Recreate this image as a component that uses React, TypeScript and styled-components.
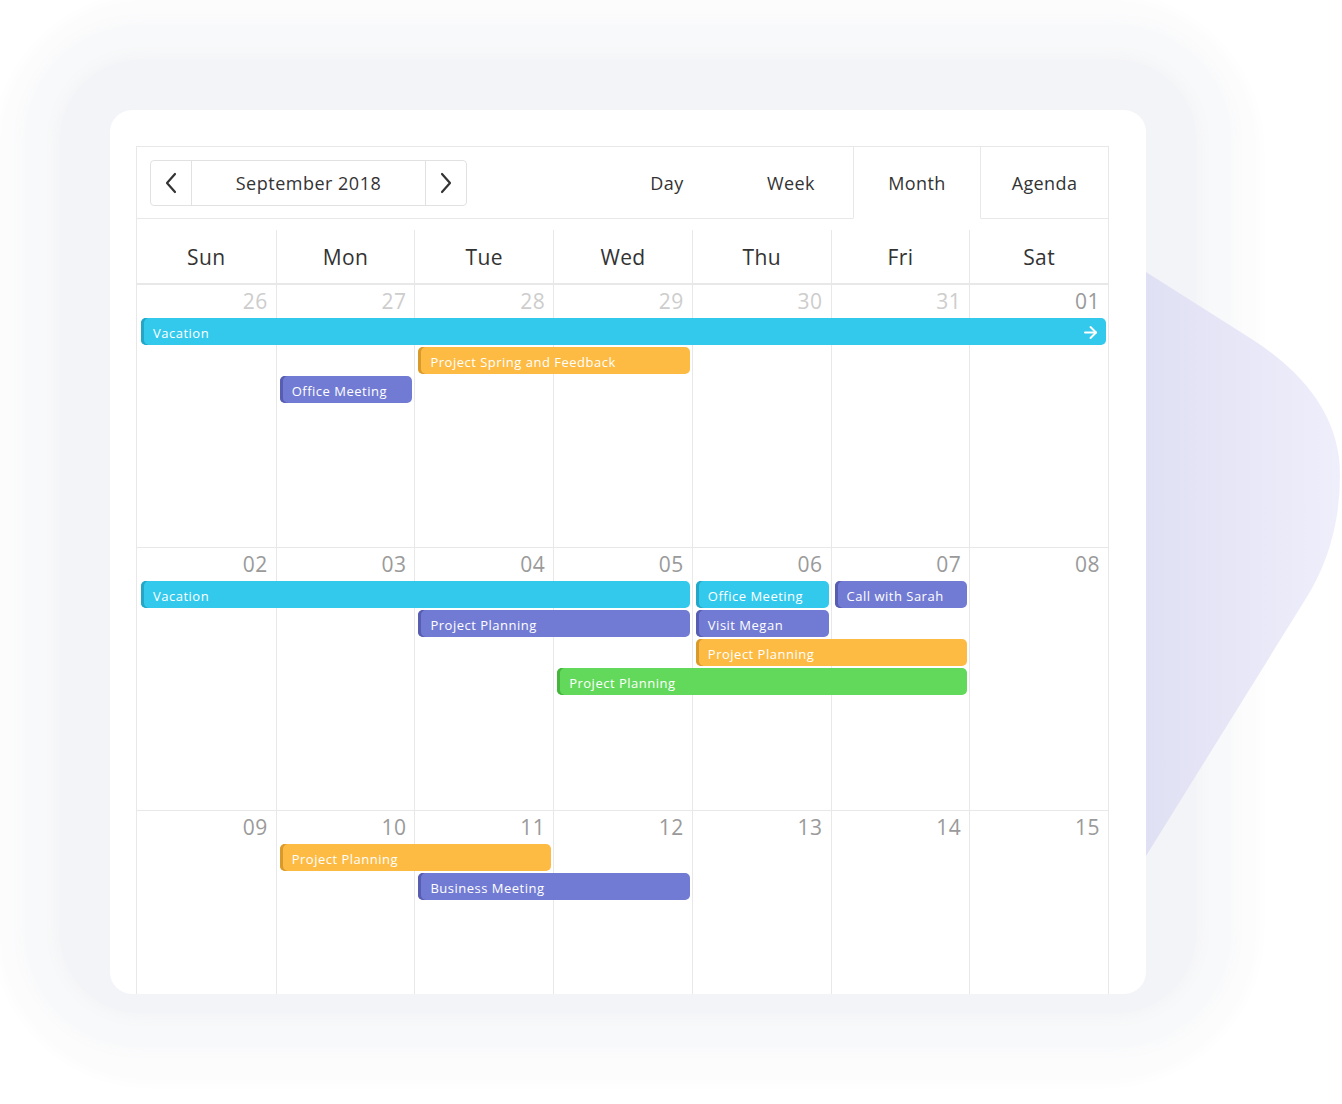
import React from 'react';
import styled, { createGlobalStyle } from 'styled-components';
import { ArrowRight } from 'lucide-react';

const GlobalStyle = createGlobalStyle`
  body {
    margin: 0;
    background: #ffffff;
    font-family: "Open Sans", "Noto Sans", sans-serif;
  }
`

type Tone = 'cyan' | 'orange' | 'purple' | 'green';

const tones: Record<Tone, { fill: string; edge: string }> = {
  cyan: { fill: '#33c9ed', edge: '#24a6c6' },
  orange: { fill: '#fdbb44', edge: '#d99a2c' },
  purple: { fill: '#727bd3', edge: '#575db0' },
  green: { fill: '#62d95a', edge: '#45b53e' },
};

const Stage = styled.div`
  position: relative;
  width: 1342px;
  height: 1104px;
  overflow: hidden;
  background: #ffffff;
`

// soft concentric glow behind the card
const Halo = styled.div<{ $pad: string; $bg: string; $radius: number }>`
  width: fit-content;
  padding: ${(p) => p.$pad};
  background: ${(p) => p.$bg};
  border-radius: ${(p) => p.$radius}px;
  box-shadow: 0 0 14px 4px ${(p) => p.$bg};
`

const Blob = styled.svg`
  position: absolute;
  left: 1100px;
  top: 250px;
  z-index: 1;
`

const Card = styled.div`
  position: relative;
  z-index: 2;
  width: 1036px;
  height: 884px;
  box-sizing: border-box;
  padding: 36px 37px 0 26px;
  background: #ffffff;
  border-radius: 22px;
  overflow: hidden;
`

const Calendar = styled.div`
  border: 1px solid #e8e8e8;
  border-bottom: none;
  color: #333333;
`

const Toolbar = styled.div`
  display: flex;
  height: 72px;
`

const NavArea = styled.div`
  flex: 1;
  display: flex;
  align-items: center;
  padding-left: 13px;
  border-bottom: 1px solid #e8e8e8;
`

const NavGroup = styled.div`
  display: flex;
  height: 46px;
  border: 1px solid #e1e1e1;
  border-radius: 4px;
  box-sizing: border-box;
`

const NavButton = styled.div`
  width: 40px;
  display: flex;
  align-items: center;
  justify-content: center;
`

const MonthLabel = styled.div`
  width: 233px;
  display: flex;
  align-items: center;
  justify-content: center;
  border-left: 1px solid #e1e1e1;
  border-right: 1px solid #e1e1e1;
  font-size: 18px;
  font-weight: 500;
  letter-spacing: 0.5px;
  color: #333333;
`

const ViewTab = styled.div<{ $active?: boolean; $w: number }>`
  width: ${(p) => p.$w}px;
  box-sizing: border-box;
  display: flex;
  align-items: center;
  justify-content: center;
  font-size: 18px;
  font-weight: 500;
  letter-spacing: 0.4px;
  color: #333333;
  border-bottom: ${(p) => (p.$active ? '1px solid transparent' : '1px solid #e8e8e8')};
  border-left: ${(p) => (p.$active ? '1px solid #e8e8e8' : 'none')};
  border-right: ${(p) => (p.$active ? '1px solid #e8e8e8' : 'none')};
`

const HeaderRow = styled.div`
  display: grid;
  grid-template-columns: repeat(7, 1fr);
  padding-top: 11px;
  border-bottom: 2px solid #e8e8e8;
`

const HeaderCell = styled.div<{ $first?: boolean }>`
  height: 53px;
  display: flex;
  align-items: center;
  justify-content: center;
  font-size: 21px;
  font-weight: 500;
  letter-spacing: 0.4px;
  color: #333333;
  border-left: ${(p) => (p.$first ? 'none' : '1px solid #e8e8e8')};
`

const WeekRow = styled.div`
  display: grid;
  grid-template-columns: repeat(7, 1fr);
  grid-template-rows: 33px repeat(4, 29px) 1fr;
  height: 262px;
  border-bottom: 1px solid #e8e8e8;
`

const DayCell = styled.div<{ $col: number }>`
  grid-row: 1 / -1;
  grid-column: ${(p) => p.$col};
  border-left: ${(p) => (p.$col === 1 ? 'none' : '1px solid #e8e8e8')};
  display: flex;
  justify-content: flex-end;
  align-items: flex-start;
  padding: 3px 8px 0 0;
`

const DateNum = styled.span<{ $muted?: boolean }>`
  font-size: 21px;
  font-weight: 500;
  line-height: 26px;
  letter-spacing: 0.5px;
  color: ${(p) => (p.$muted ? '#cdcdcd' : '#9a9a9a')};
`

const EventBar = styled.div<{ $tone: Tone }>`
  align-self: start;
  height: 27px;
  margin: 0 2px 2px 4px;
  padding: 2px 6px 0 12px;
  box-sizing: border-box;
  display: flex;
  align-items: center;
  justify-content: space-between;
  border-radius: 5px;
  background: ${(p) => tones[p.$tone].fill};
  box-shadow: inset 3px 0 0 ${(p) => tones[p.$tone].edge};
  color: #ffffff;
  font-size: 13px;
  font-weight: 500;
  letter-spacing: 0.5px;
  white-space: nowrap;
  overflow: hidden;
`

type CalEvent = { title: string; tone: Tone; col: number; span: number; row: number; more?: boolean };
type Week = { days: string[]; muted: number; events: CalEvent[] };

const weeks: Week[] = [
  {
    days: ['26', '27', '28', '29', '30', '31', '01'],
    muted: 6,
    events: [
      { title: 'Vacation', tone: 'cyan', col: 1, span: 7, row: 1, more: true },
      { title: 'Project Spring and Feedback', tone: 'orange', col: 3, span: 2, row: 2 },
      { title: 'Office Meeting', tone: 'purple', col: 2, span: 1, row: 3 },
    ],
  },
  {
    days: ['02', '03', '04', '05', '06', '07', '08'],
    muted: 0,
    events: [
      { title: 'Vacation', tone: 'cyan', col: 1, span: 4, row: 1 },
      { title: 'Project Planning', tone: 'purple', col: 3, span: 2, row: 2 },
      { title: 'Office Meeting', tone: 'cyan', col: 5, span: 1, row: 1 },
      { title: 'Visit Megan', tone: 'purple', col: 5, span: 1, row: 2 },
      { title: 'Call with Sarah', tone: 'purple', col: 6, span: 1, row: 1 },
      { title: 'Project Planning', tone: 'orange', col: 5, span: 2, row: 3 },
      { title: 'Project Planning', tone: 'green', col: 4, span: 3, row: 4 },
    ],
  },
  {
    days: ['09', '10', '11', '12', '13', '14', '15'],
    muted: 0,
    events: [
      { title: 'Project Planning', tone: 'orange', col: 2, span: 2, row: 1 },
      { title: 'Business Meeting', tone: 'purple', col: 3, span: 2, row: 2 },
    ],
  },
];

const dayNames = ['Sun', 'Mon', 'Tue', 'Wed', 'Thu', 'Fri', 'Sat'];

const views = [
  { label: 'Day', w: 124 },
  { label: 'Week', w: 124 },
  { label: 'Month', w: 128, active: true },
  { label: 'Agenda', w: 127 },
];

const Chevron = ({ dir }: { dir: 'left' | 'right' }) => (
  <svg width="12" height="22" viewBox="0 0 12 22" fill="none">
    <polyline
      points={dir === 'left' ? '10,2 2,11 10,20' : '2,2 10,11 2,20'}
      stroke="#333333"
      strokeWidth="2.2"
      strokeLinecap="round"
      strokeLinejoin="round"
    />
  </svg>
);

export default function App() {
  return (
    <Stage>
      <GlobalStyle />
      <Blob width="242" height="620" viewBox="0 0 242 620">
        <defs>
          <linearGradient id="blobFill" x1="0" y1="0" x2="1" y2="0">
            <stop offset="0" stopColor="#e0e0f4" />
            <stop offset="1" stopColor="#efeefb" />
          </linearGradient>
        </defs>
        <path
          d="M46 22 L150 88 Q240 145 240 225 Q240 295 205 350 L46 606 Z"
          fill="url(#blobFill)"
        />
      </Blob>
      <Halo $pad="25px 25px 33px" $bg="#fcfcfd" $radius={150}>
        <Halo $pad="35px 35px 34px" $bg="#f8f9fa" $radius={115}>
          <Halo $pad="50px 50px 19px" $bg="#f3f4f7" $radius={80}>
            <Card>
              <Calendar>
                <Toolbar>
                  <NavArea>
                    <NavGroup>
                      <NavButton><Chevron dir="left" /></NavButton>
                      <MonthLabel>September 2018</MonthLabel>
                      <NavButton><Chevron dir="right" /></NavButton>
                    </NavGroup>
                  </NavArea>
                  {views.map((v) => (
                    <ViewTab key={v.label} $w={v.w} $active={v.active}>{v.label}</ViewTab>
                  ))}
                </Toolbar>
                <HeaderRow>
                  {dayNames.map((d, i) => (
                    <HeaderCell key={d} $first={i === 0}>{d}</HeaderCell>
                  ))}
                </HeaderRow>
                {weeks.map((w, wi) => (
                  <WeekRow key={wi}>
                    {w.days.map((d, i) => (
                      <DayCell key={d} $col={i + 1}>
                        <DateNum $muted={i < w.muted}>{d}</DateNum>
                      </DayCell>
                    ))}
                    {w.events.map((e, ei) => (
                      <EventBar
                        key={ei}
                        $tone={e.tone}
                        style={{ gridColumn: `${e.col} / span ${e.span}`, gridRow: e.row + 1 }}
                      >
                        <span>{e.title}</span>
                        {e.more && <ArrowRight size={19} strokeWidth={2.4} />}
                      </EventBar>
                    ))}
                  </WeekRow>
                ))}
              </Calendar>
            </Card>
          </Halo>
        </Halo>
      </Halo>
    </Stage>
  );
}
